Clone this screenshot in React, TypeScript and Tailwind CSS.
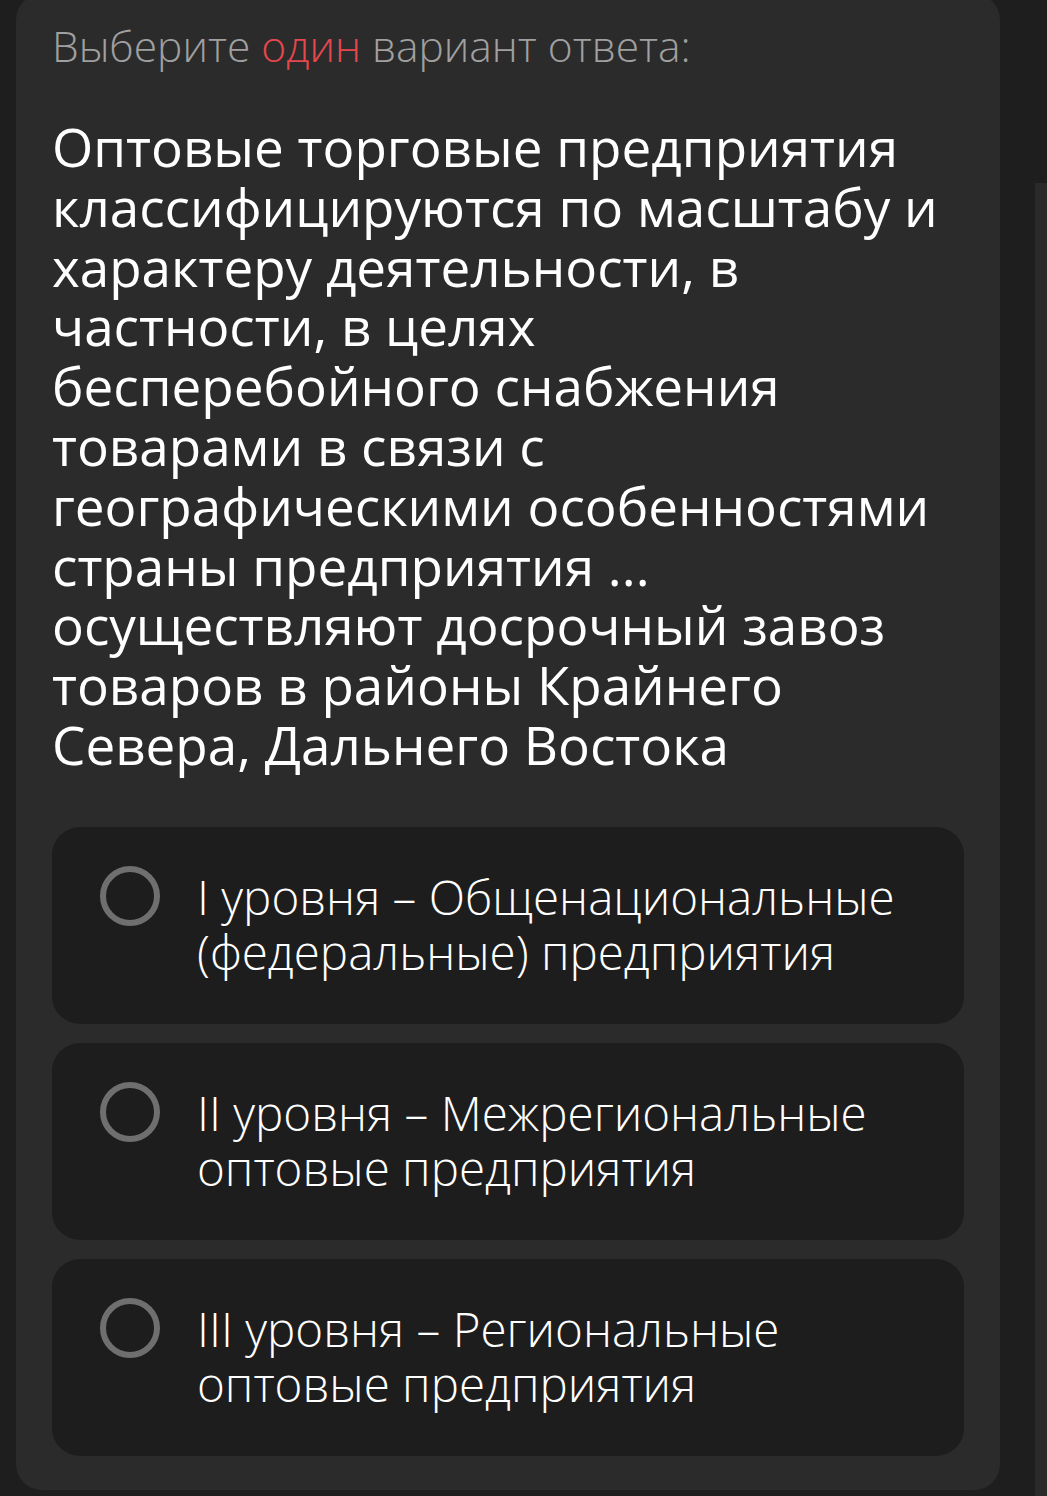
import { Fragment } from 'react';

const question = [
  'Оптовые торговые предприятия',
  'классифицируются по масштабу и',
  'характеру деятельности, в',
  'частности, в целях',
  'бесперебойного снабжения',
  'товарами в связи с',
  'географическими особенностями',
  'страны предприятия ...',
  'осуществляют досрочный завоз',
  'товаров в районы Крайнего',
  'Севера, Дальнего Востока',
];

const options = [
  ['I уровня – Общенациональные', '(федеральные) предприятия'],
  ['II уровня – Межрегиональные', 'оптовые предприятия'],
  ['III уровня – Региональные', 'оптовые предприятия'],
];

// keeps the app's own line breaks
function Lines({ lines }: { lines: string[] }) {
  return (
    <>
      {lines.map((line, i) => (
        <Fragment key={line}>
          {i > 0 && <br />}
          {line}
        </Fragment>
      ))}
    </>
  );
}

function Radio() {
  return (
    <span className="-mt-[3px] block h-[60px] w-[60px] shrink-0 rounded-full border-[6px] border-[#6f6f6f]" />
  );
}

export default function App() {
  return (
    <div
      className="flex h-[1496px] w-[1047px] overflow-hidden bg-[#1e1e1e]"
      style={{ fontFamily: '"Open Sans", "Noto Sans", sans-serif' }}
    >
      {/* Question card */}
      <div className="ml-4 -mt-[6px] flex h-[1496px] w-[984px] flex-col rounded-[26px] bg-[#2b2b2b] px-9">
        <p className="mt-[30px] text-[42.5px] font-light leading-[44px] text-[#a0a0a0]">
          Выберите <span className="text-[#e5474d]">один</span> вариант ответа:
        </p>

        <h1 className="mt-[49px] whitespace-nowrap text-[53px] font-[370] leading-[59.8px] text-white">
          <Lines lines={question} />
        </h1>

        <div className="mt-[52px] flex flex-col gap-[19px]">
          {options.map((opt) => (
            <label
              key={opt[0]}
              className="flex h-[197px] items-start gap-[37px] rounded-[28px] bg-[#1d1d1d] pl-12 pt-[42px]"
            >
              <Radio />
              <span className="whitespace-nowrap text-[47.5px] font-[360] leading-[55px] text-white">
                <Lines lines={opt} />
              </span>
            </label>
          ))}
        </div>
      </div>

      {/* Scrollbar strip */}
      <div className="ml-[35px] flex w-[12px] flex-col pt-[183px]">
        <div className="flex-1 bg-[#2a2a2a]" />
      </div>
    </div>
  );
}
